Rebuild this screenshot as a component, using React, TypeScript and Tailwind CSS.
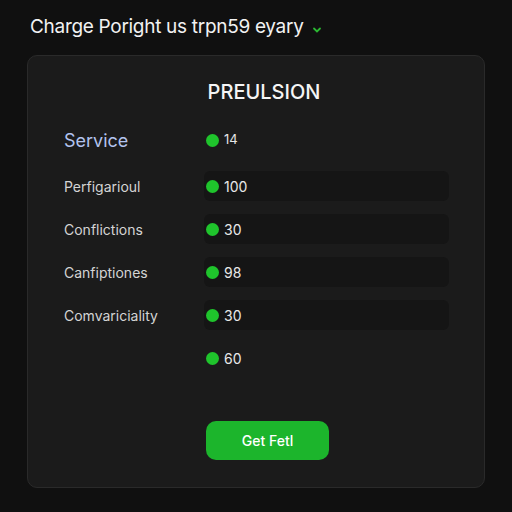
import React from 'react';

const rows = [
  { label: "Perfigarioul", value: "100", bar: true },
  { label: "Conflictions", value: "30", bar: true },
  { label: "Canfiptiones", value: "98", bar: true },
  { label: "Comvariciality", value: "30", bar: true },
  { label: "", value: "60", bar: false },
];

function Dot() {
  return <span className="w-[13px] h-[13px] rounded-full bg-[#1fc42c] shrink-0" />;
}

export default function App() {
  return (
    <div
      className="w-[512px] h-[512px] bg-[#101010] overflow-hidden flex flex-col"
      style={{ fontFamily: "Inter, 'Noto Sans', sans-serif" }}
    >
      {/* Header */}
      <div className="flex items-center gap-2 pl-[30px] pt-[15px] h-[40px]">
        <h1 className="text-[19px] text-[#f2f2f2] tracking-[-0.3px]">Charge Poright us trpn59 eyary</h1>
        <svg width="10" height="8" viewBox="0 0 10 8" className="mt-[4px]">
          <path d="M2 2.5 L5 5.5 L8 2.5" stroke="#2bb832" strokeWidth="1.8" fill="none" strokeLinecap="round" />
        </svg>
      </div>

      {/* Card */}
      <div className="mx-[27px] mt-[15px] h-[433px] rounded-[10px] bg-[#1b1b1b] border border-[#2a2a2a] pt-[22px]">
        <h2 className="text-center pl-[16px] text-[20px] font-medium text-[#f5f5f5] leading-[28px]">PREULSION</h2>

        <div className="grid grid-cols-[140px_245px] pl-[36px] mt-[19px] gap-y-[13px]">
          <div className="h-[30px] flex items-center text-[18px] text-[#b3c3ee]">Service</div>
          <div className="h-[30px] flex items-center gap-[5px] pl-[2px] text-[13px] text-[#e6e6e6]">
            <Dot />
            14
          </div>

          {rows.map((r, i) => (
            <React.Fragment key={i}>
              <div className={`h-[30px] flex items-center text-[14px] text-[#d4d4d4] ${i === 0 ? "mt-[3px]" : ""}`}>
                {r.label}
              </div>
              <div
                className={`h-[30px] flex items-center gap-[5px] pl-[2px] text-[14px] text-[#e8e8e8] rounded-[6px] ${
                  r.bar ? "bg-[#151515]" : ""
                } ${i === 0 ? "mt-[3px]" : ""}`}
              >
                <Dot />
                {r.value}
              </div>
            </React.Fragment>
          ))}

          <div />
          <div className="mt-[35px] pl-[2px]">
            <button className="w-[123px] h-[39px] rounded-[10px] bg-[#1cb52c] text-white text-[14px] font-medium">
              Get Fetl
            </button>
          </div>
        </div>
      </div>
    </div>
  );
}
